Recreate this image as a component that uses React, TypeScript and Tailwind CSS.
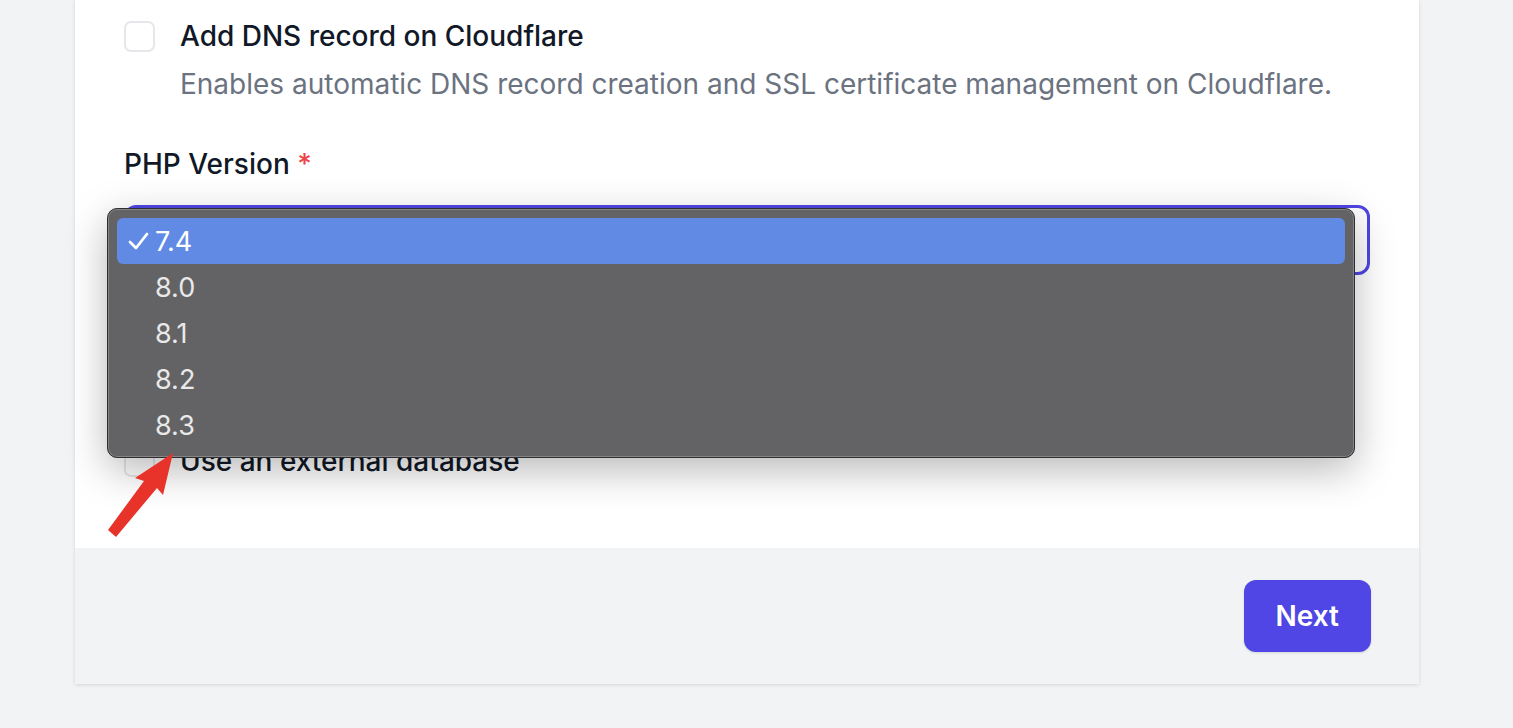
import React from 'react';

const versions = ['7.4', '8.0', '8.1', '8.2', '8.3'];

const Checkbox = () => (
  <div className="mt-[5px] w-[31px] h-[31px] shrink-0 rounded-[7px] border-2 border-[#e5e7eb] bg-white" />
);

export default function App() {
  return (
    <div className="relative min-h-screen bg-[#f2f3f5] font-['Inter',sans-serif] overflow-hidden">
      <div className="ml-[75px] w-[1344px] bg-white shadow-[0_1px_4px_rgba(0,0,0,0.12)]">
        {/* Form body */}
        <div className="px-[49px] pt-[16px] pb-[67px]">
          <div className="flex gap-[25px]">
            <Checkbox />
            <div>
              <div className="text-[28px] leading-[40px] font-medium text-[#111827]">Add DNS record on Cloudflare</div>
              <p className="mt-[8px] text-[28px] leading-[40px] text-[#6b7280]">
                Enables automatic DNS record creation and SSL certificate management on Cloudflare.
              </p>
            </div>
          </div>

          <div className="mt-[44px] text-[28px] leading-[32px] font-medium text-[#111827]">
            PHP Version <span className="text-[#ef4444]">*</span>
          </div>

          <div className="relative mt-[25px]">
            <div className="h-[70px] rounded-[12px] border-[3px] border-[#4f46e5] bg-white" />

            {/* Native select menu */}
            <div className="absolute left-[-17px] top-[3px] z-10 w-[1248px] rounded-[10px] border border-[#2e2e30] bg-[#636366] p-[9px] shadow-[0_12px_40px_rgba(0,0,0,0.28),inset_0_0_0_1px_rgba(255,255,255,0.22)]">
              {versions.map((v, i) => (
                <div
                  key={v}
                  className={
                    i === 0
                      ? 'flex h-[46px] items-center rounded-[6px] bg-[#608ae3] text-[27px] text-white'
                      : 'flex h-[46px] items-center text-[27px] text-[#e9e9e9]'
                  }
                >
                  <div className="w-[38px] flex justify-end pr-[6px]">
                    {i === 0 && (
                      <svg width="21" height="18" viewBox="0 0 21 18" fill="none">
                        <path d="M2 10 L8 16 L19 2" stroke="white" strokeWidth="2.8" strokeLinecap="round" strokeLinejoin="round" />
                      </svg>
                    )}
                  </div>
                  <span className="pt-[3px]">{v}</span>
                </div>
              ))}
            </div>
          </div>

          <div className="mt-[166px] flex gap-[25px]">
            <Checkbox />
            <div className="text-[28px] leading-[40px] font-medium text-[#111827]">Use an external database</div>
          </div>
        </div>

        {/* Footer */}
        <div className="h-[136px] bg-[#f2f3f5] flex items-center justify-end pr-[48px]">
          <button className="h-[72px] px-[32px] rounded-[12px] bg-[#4f46e5] text-white text-[28px] font-semibold shadow-sm">
            Next
          </button>
        </div>
      </div>

      {/* Annotation arrow */}
      <svg className="absolute left-0 top-0 z-20 pointer-events-none" width="1513" height="728">
        <polygon
          points="173,453 163,495 157,488 116,537 108,530 144,481 135,478"
          fill="#e8332a"
        />
      </svg>
    </div>
  );
}
